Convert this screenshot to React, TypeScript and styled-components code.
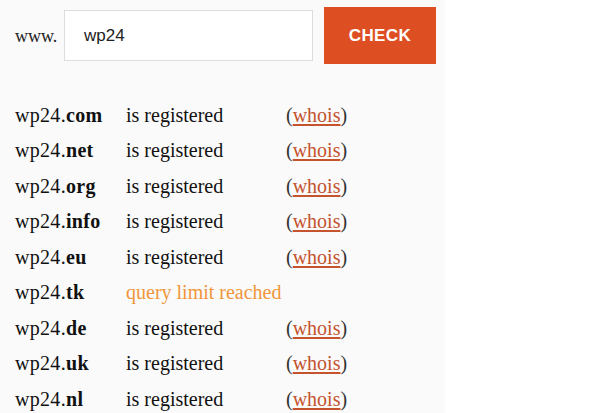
import React from "react";
import styled, { createGlobalStyle } from "styled-components";

const Global = createGlobalStyle`
  html, body { margin: 0; padding: 0; background: #ffffff; }
  body { font-family: "Liberation Serif", "Times New Roman", serif; }
`;

const Panel = styled.div`
  width: 445px;
  min-height: 420px;
  background: #fafafa;
  padding: 7px 0 0 15px;
  box-sizing: border-box;
`;

const Form = styled.form`
  display: flex;
  align-items: center;
  height: 57px;
`;

const Prefix = styled.span`
  font-family: "Liberation Serif", serif;
  font-size: 18px;
  color: #222;
  width: 49px;
  padding-top: 2px;
`;

const Input = styled.input`
  box-sizing: border-box;
  width: 249px;
  height: 51px;
  border: 1px solid #dddddd;
  background: #ffffff;
  padding: 0 0 0 19px;
  font-family: "Liberation Sans", Arial, sans-serif;
  font-size: 17px;
  color: #222;
  outline: none;
  margin-right: 11px;
`;

const Button = styled.button`
  box-sizing: border-box;
  width: 112px;
  height: 57px;
  border: none;
  background: #dd4f22;
  color: #ffffff;
  font-family: "Liberation Sans", Arial, sans-serif;
  font-weight: 700;
  font-size: 17px;
  letter-spacing: 0.4px;
  cursor: pointer;
`;

const List = styled.div`
  margin-top: 33px;
  display: flex;
  flex-direction: column;
`;

const Row = styled.div`
  display: grid;
  grid-template-columns: 111px 160px auto;
  height: 35.5px;
  align-items: center;
  font-size: 20px;
  color: #111;
  line-height: 1;
`;

const Domain = styled.span`
  white-space: nowrap;
  letter-spacing: 0.3px;
`;

const Tld = styled.b`
  font-weight: 700;
`;

const Status = styled.span<{ $warn?: boolean }>`
  color: ${(p) => (p.$warn ? "#f0963a" : "#111")};
  white-space: nowrap;
`;

const Whois = styled.span`
  color: #333;
  white-space: nowrap;
`;

const Link = styled.a`
  color: #c4532e;
  text-decoration: underline;
  text-underline-offset: 2px;
`;

const rows: { tld: string; limit?: boolean }[] = [
  { tld: "com" },
  { tld: "net" },
  { tld: "org" },
  { tld: "info" },
  { tld: "eu" },
  { tld: "tk", limit: true },
  { tld: "de" },
  { tld: "uk" },
  { tld: "nl" },
];

export default function App() {
  return (
    <>
      <Global />
      <Panel>
        <Form onSubmit={(e) => e.preventDefault()}>
          <Prefix>www.</Prefix>
          <Input defaultValue="wp24" />
          <Button type="submit">CHECK</Button>
        </Form>
        <List>
          {rows.map((r) => (
            <Row key={r.tld}>
              <Domain>
                wp24.<Tld>{r.tld}</Tld>
              </Domain>
              {r.limit ? (
                <Status $warn>query limit reached</Status>
              ) : (
                <>
                  <Status>is registered</Status>
                  <Whois>
                    (<Link href="#">whois</Link>)
                  </Whois>
                </>
              )}
            </Row>
          ))}
        </List>
      </Panel>
    </>
  );
}
